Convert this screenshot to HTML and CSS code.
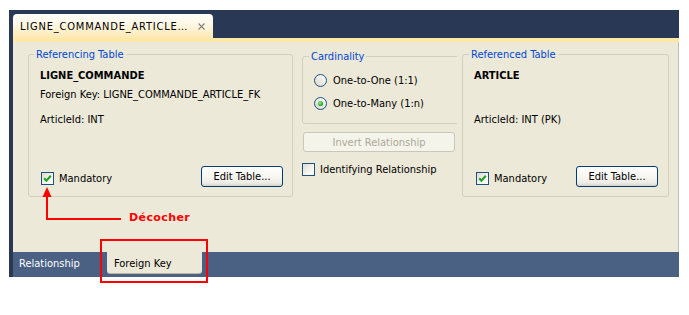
FILE: index.html
```html
<!DOCTYPE html>
<html>
<head>
<meta charset="utf-8">
<link rel="stylesheet" href="styles.css">
</head>
<body>
<div class="window">
  <div class="tabstrip">
    <div class="doc-tab">
      <span class="doc-title">LIGNE_COMMANDE_ARTICLE…</span>
      <svg class="close" width="7" height="7" viewBox="0 0 7 7"><path d="M0.5 0.5 L6.5 6.5 M6.5 0.5 L0.5 6.5" stroke="#808080" stroke-width="1.1" fill="none"/></svg>
    </div>
  </div>
  <div class="accent"></div>
  <div class="content">
    <fieldset class="group group-left">
      <legend>Referencing Table</legend>
      <div class="gbody">
        <div class="tname">LIGNE_COMMANDE</div>
        <div class="line fk">Foreign Key: LIGNE_COMMANDE_ARTICLE_FK</div>
        <div class="line col">ArticleId: INT</div>
        <div class="foot">
          <label class="check"><span class="box"><svg width="11" height="11" viewBox="0 0 11 11"><polyline points="2.2,5.2 4.4,7.6 8.8,2.8" fill="none" stroke="#21a121" stroke-width="2.1"/></svg></span>Mandatory</label>
          <button class="btn">Edit Table...</button>
        </div>
      </div>
    </fieldset>
    <div class="middle">
      <fieldset class="group card">
        <legend>Cardinality</legend>
        <div class="cbody">
          <label class="radio r1"><svg class="rb" width="13" height="13" viewBox="0 0 13 13"><circle cx="6.5" cy="6.5" r="6" fill="url(#rg)" stroke="#1c5180"/></svg>One-to-One (1:1)</label>
          <label class="radio r2"><svg class="rb" width="13" height="13" viewBox="0 0 13 13"><defs><linearGradient id="rg" x1="0" y1="1" x2="1" y2="0"><stop offset="0" stop-color="#d8d5c8"/><stop offset="1" stop-color="#ffffff"/></linearGradient><radialGradient id="dg" cx="0.4" cy="0.4" r="0.6"><stop offset="0" stop-color="#8ef08e"/><stop offset="1" stop-color="#1fa21f"/></radialGradient></defs><circle cx="6.5" cy="6.5" r="6" fill="url(#rg)" stroke="#1c5180"/><circle cx="6.5" cy="6.5" r="2.6" fill="url(#dg)"/></svg>One-to-Many (1:n)</label>
        </div>
      </fieldset>
      <button class="btn btn-wide" disabled>Invert Relationship</button>
      <label class="check ident"><span class="box"></span>Identifying Relationship</label>
    </div>
    <fieldset class="group group-right">
      <legend>Referenced Table</legend>
      <div class="gbody gbody-right">
        <div class="tname">ARTICLE</div>
        <div class="line col col-right">ArticleId: INT (PK)</div>
        <div class="foot">
          <label class="check"><span class="box"><svg width="11" height="11" viewBox="0 0 11 11"><polyline points="2.2,5.2 4.4,7.6 8.8,2.8" fill="none" stroke="#21a121" stroke-width="2.1"/></svg></span>Mandatory</label>
          <button class="btn">Edit Table...</button>
        </div>
      </div>
    </fieldset>
  </div>
  <div class="bottombar">
    <div class="btab">Relationship</div>
    <div class="btab active">Foreign Key</div>
  </div>
</div>

<svg class="annot" width="689" height="315" viewBox="0 0 689 315">
  <polygon points="47,187 42.5,197 51.5,197" fill="#ff0000"/>
  <polyline points="47,196 47,219 121,219" fill="none" stroke="#ff0000" stroke-width="2"/>
  <rect x="101" y="240" width="106" height="42" fill="none" stroke="#ff0000" stroke-width="2"/>
</svg>
<span class="note">Décocher</span>
</body>
</html>
```
FILE: styles.css
```css
html, body {
  margin: 0;
  padding: 0;
}
body {
  background: #ffffff;
  font-family: "DejaVu Sans Condensed", "Liberation Sans", sans-serif;
  font-size: 11px;
  line-height: 13px;
  color: #000000;
  position: relative;
  width: 689px;
  height: 315px;
  overflow: hidden;
}
.window {
  margin: 10px 0 0 9px;
  width: 670px;
  background: #293955;
  padding-left: 4px;
  box-sizing: border-box;
}
.tabstrip {
  height: 28px;
  padding-top: 4px;
  box-sizing: border-box;
  display: flex;
}
.doc-tab {
  width: 200px;
  height: 24px;
  box-sizing: border-box;
  border-radius: 4px 4px 0 0;
  background: linear-gradient(#fffefb 0%, #fff7e4 45%, #fde8b0 100%);
  display: flex;
  align-items: center;
  padding-left: 7px;
}
.doc-title {
  letter-spacing: 0.8px;
  white-space: nowrap;
}
.close {
  margin-left: auto;
  margin-right: 8px;
  margin-top: 1px;
}
.accent {
  height: 4px;
  background: #fde8a8;
}
.content {
  height: 210px;
  box-sizing: border-box;
  background: #ece9d8;
  border-right: 1px solid #c5c2b2;
  display: flex;
  align-items: flex-start;
  padding: 6px 0 0 15px;
}
.group {
  margin: 0;
  padding: 0;
  border: 1px solid #d0d0bf;
  border-radius: 3px;
  min-width: 0;
  box-sizing: border-box;
}
.group legend {
  padding: 0 2px;
  margin-left: 5px;
  color: #0046d5;
  line-height: 13px;
}
.group-left {
  width: 265px;
}
.gbody {
  padding: 0 9px 9px 11px;
}
.gbody-right {
  padding-right: 10px;
}
.tname {
  font-weight: bold;
  margin-top: 8px;
  white-space: nowrap;
}
.fk {
  margin-top: 6px;
  white-space: nowrap;
}
.col {
  margin-top: 12px;
}
.col-right {
  margin-top: 31px;
}
.foot {
  margin-top: 40px;
  height: 21px;
  display: flex;
  align-items: flex-start;
  justify-content: space-between;
}
.check {
  display: flex;
  align-items: center;
  white-space: nowrap;
}
.foot .check {
  margin-top: 6px;
  margin-left: 1px;
}
.gbody-right .foot .check {
  margin-left: 2px;
}
.box {
  width: 13px;
  height: 13px;
  box-sizing: border-box;
  border: 1px solid #1c5180;
  background: linear-gradient(135deg, #dcd9cd 0%, #f6f5f0 60%, #ffffff 100%);
  margin-right: 5px;
  display: flex;
  align-items: center;
  justify-content: center;
  flex: none;
}
.box svg {
  display: block;
}
.btn {
  font: inherit;
  line-height: 13px;
  color: #000000;
  width: 82px;
  height: 21px;
  padding: 0;
  box-sizing: border-box;
  border: 1px solid #003c74;
  border-radius: 3px;
  background: linear-gradient(#ffffff 0%, #f7f6f1 50%, #ecebe4 85%, #d6d0c5 100%);
  text-align: center;
}
.middle {
  width: 155px;
  margin-left: 9px;
  margin-top: 2px;
  overflow: hidden;
}
.card {
  width: 175px;
}
.card legend {
  margin-left: 6px;
}
.cbody {
  padding: 0 0 13px 11px;
}
.radio {
  display: flex;
  align-items: center;
  height: 13px;
  white-space: nowrap;
}
.r1 {
  margin-top: 11px;
}
.r2 {
  margin-top: 10px;
}
.rb {
  margin-right: 6px;
  flex: none;
  display: block;
}
.btn-wide {
  display: block;
  width: 152px;
  height: 20px;
  margin: 8px 0 0 1px;
  color: #aca899;
  border-color: #c9c7ba;
  background: #f5f4ea;
}
.ident {
  margin-top: 11px;
  height: 13px;
}
.group-right {
  width: 207px;
  margin-left: 5px;
}
.group-right legend {
  margin-left: 6px;
}
.bottombar {
  height: 25px;
  background: #4a6184;
  display: flex;
  align-items: flex-start;
}
.btab {
  height: 21px;
  box-sizing: border-box;
  padding: 1px 0 0 6px;
  display: flex;
  align-items: center;
  color: #ffffff;
  width: 94px;
  white-space: nowrap;
}
.btab.active {
  width: 95px;
  padding-left: 7px;
  color: #000000;
  background: #ece9d8;
  border-radius: 0 0 3px 3px;
  box-shadow: 0 1px 0 #b9b6a6;
}
.annot {
  position: absolute;
  left: 0;
  top: 0;
  pointer-events: none;
}
.note {
  position: absolute;
  left: 129px;
  top: 211px;
  font-family: "DejaVu Sans", "Liberation Sans", sans-serif;
  font-weight: bold;
  font-size: 11px;
  line-height: 13px;
  letter-spacing: 0.4px;
  color: #ff0000;
}
```
